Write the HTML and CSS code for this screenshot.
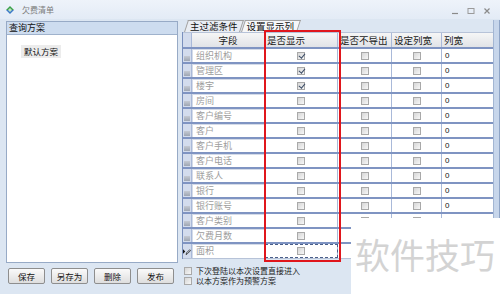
FILE: index.html
```html
<!DOCTYPE html>
<html>
<head>
<meta charset="utf-8">
<link rel="stylesheet" href="styles.css">
</head>
<body>
<div class="win">
  <div class="titlebar">
    <svg class="appicon" width="10" height="10" viewBox="0 0 10 10"><path d="M1 5 L5 1 L9 5 Z" fill="#3aa04a"/><path d="M1 5 L5 9 L9 5 Z" fill="#3a78c8"/><path d="M3 5 L5 3 L7 5 L5 7Z" fill="#bfe3c0"/></svg>
    <span class="title">欠费清单</span>
    <div class="controls">
      <svg width="8" height="8" viewBox="0 0 8 8"><path d="M1 6.5H7" stroke="#8a8a8a" stroke-width="1.2"/></svg>
      <svg width="8" height="8" viewBox="0 0 8 8"><rect x="1" y="1.5" width="6" height="5" fill="none" stroke="#9a9a9a"/></svg>
      <svg width="8" height="8" viewBox="0 0 8 8"><path d="M1.5 1.5L6.5 6.5M6.5 1.5L1.5 6.5" stroke="#8a8a8a" stroke-width="1.2"/></svg>
    </div>
  </div>
  <div class="main">
    <div class="left">
      <div class="plist">
        <div class="phead">查询方案</div>
        <div class="pbody"><span class="pitem">默认方案</span></div>
      </div>
      <div class="btns">
        <button class="btn">保存</button>
        <button class="btn">另存为</button>
        <button class="btn">删除</button>
        <button class="btn">发布</button>
      </div>
    </div>
    <div class="right">
      <div class="tabs">
        <span class="tab">主过滤条件</span>
        <span class="tab active">设置显示列</span>
      </div>
      <div class="grid">
        <div class="row head">
          <div class="c rh"></div>
          <div class="c hf">字段</div>
          <div class="c">是否显示</div>
          <div class="c">是否不导出</div>
          <div class="c">设定列宽</div>
          <div class="c">列宽</div>
        </div>
        <div class="row"><div class="c rh"><i></i></div><div class="c f">组织机构</div><div class="c cb"><span class="box on"></span></div><div class="c cb"><span class="box"></span></div><div class="c cb"><span class="box"></span></div><div class="c n">0</div></div>
        <div class="row"><div class="c rh"><i></i></div><div class="c f">管理区</div><div class="c cb"><span class="box on"></span></div><div class="c cb"><span class="box"></span></div><div class="c cb"><span class="box"></span></div><div class="c n">0</div></div>
        <div class="row"><div class="c rh"><i></i></div><div class="c f">楼宇</div><div class="c cb"><span class="box on"></span></div><div class="c cb"><span class="box"></span></div><div class="c cb"><span class="box"></span></div><div class="c n">0</div></div>
        <div class="row"><div class="c rh"><i></i></div><div class="c f">房间</div><div class="c cb"><span class="box"></span></div><div class="c cb"><span class="box"></span></div><div class="c cb"><span class="box"></span></div><div class="c n">0</div></div>
        <div class="row"><div class="c rh"><i></i></div><div class="c f">客户编号</div><div class="c cb"><span class="box"></span></div><div class="c cb"><span class="box"></span></div><div class="c cb"><span class="box"></span></div><div class="c n">0</div></div>
        <div class="row"><div class="c rh"><i></i></div><div class="c f">客户</div><div class="c cb"><span class="box"></span></div><div class="c cb"><span class="box"></span></div><div class="c cb"><span class="box"></span></div><div class="c n">0</div></div>
        <div class="row"><div class="c rh"><i></i></div><div class="c f">客户手机</div><div class="c cb"><span class="box"></span></div><div class="c cb"><span class="box"></span></div><div class="c cb"><span class="box"></span></div><div class="c n">0</div></div>
        <div class="row"><div class="c rh"><i></i></div><div class="c f">客户电话</div><div class="c cb"><span class="box"></span></div><div class="c cb"><span class="box"></span></div><div class="c cb"><span class="box"></span></div><div class="c n">0</div></div>
        <div class="row"><div class="c rh"><i></i></div><div class="c f">联系人</div><div class="c cb"><span class="box"></span></div><div class="c cb"><span class="box"></span></div><div class="c cb"><span class="box"></span></div><div class="c n">0</div></div>
        <div class="row"><div class="c rh"><i></i></div><div class="c f">银行</div><div class="c cb"><span class="box"></span></div><div class="c cb"><span class="box"></span></div><div class="c cb"><span class="box"></span></div><div class="c n">0</div></div>
        <div class="row"><div class="c rh"><i></i></div><div class="c f">银行账号</div><div class="c cb"><span class="box"></span></div><div class="c cb"><span class="box"></span></div><div class="c cb"><span class="box"></span></div><div class="c n">0</div></div>
        <div class="row"><div class="c rh"><i></i></div><div class="c f">客户类别</div><div class="c cb"><span class="box"></span></div><div class="c cb"><span class="box"></span></div><div class="c cb"><span class="box"></span></div><div class="c n">0</div></div>
        <div class="row"><div class="c rh"><i></i></div><div class="c f">欠费月数</div><div class="c cb"><span class="box"></span></div><div class="c cb"><span class="box"></span></div><div class="c cb"><span class="box"></span></div><div class="c n">0</div></div>
        <div class="row last"><div class="c rh cur"><svg width="9" height="9" viewBox="0 0 9 9"><path d="M0 2L2.5 4.5L0 7Z" fill="#111"/><path d="M3.5 8L4 6L7.5 2.5L8.5 3.5L5 7Z" fill="none" stroke="#222" stroke-width="0.9"/></svg></div><div class="c f">面积</div><div class="c cb focus"><span class="box"></span></div><div class="c cb"><span class="box"></span></div><div class="c cb"><span class="box"></span></div><div class="c n">0</div></div>
      </div>
      <div class="opts">
        <div class="opt"><span class="box"></span>下次登陆以本次设置直接进入</div>
        <div class="opt"><span class="box"></span>以本方案作为预警方案</div>
      </div>
    </div>
    <div class="vscroll"></div>
  </div>
  <div class="redbox"></div>
  <div class="watermark">软件技巧</div>
</div>
</body>
</html>
```
FILE: styles.css
```css
* { box-sizing: border-box; }
body {
  margin: 0;
  width: 500px;
  height: 294px;
  overflow: hidden;
  font-family: "Noto Sans CJK SC", "Noto Sans", sans-serif;
  background: #dde7f3;
}
.win {
  position: relative;
  width: 500px;
  height: 294px;
  background: #dce6f2;
  display: flex;
  flex-direction: column;
}
.titlebar {
  height: 19px;
  flex: none;
  display: flex;
  align-items: center;
  padding-left: 5px;
  background: linear-gradient(#eef3fa, #e3ebf6);
}
.title {
  margin-left: 7px;
  font-size: 8px;
  line-height: 10px;
  color: #7c7c7c;
}
.controls {
  margin-left: auto;
  margin-right: 9px;
  display: flex;
  gap: 8px;
  margin-top: 2px;
}
.main {
  flex: 1;
  display: flex;
  padding: 2px 0 0 6px;
  min-height: 0;
}
.left {
  width: 172px;
  flex: none;
  display: flex;
  flex-direction: column;
}
.plist {
  height: 242px;
  border: 1px solid #97aac6;
  background: #fff;
}
.phead {
  height: 13px;
  background: #cddcef;
  border-bottom: 1px solid #9fb2cc;
  font-size: 9px;
  line-height: 12px;
  padding-left: 2px;
  color: #111;
}
.pbody {
  padding: 1px 0 0 14px;
}
.pitem {
  display: inline-block;
  background: #ececec;
  font-size: 8.5px;
  line-height: 13px;
  height: 13px;
  padding: 0 3px;
  color: #111;
}
.btns {
  display: flex;
  gap: 6px;
  padding-left: 2px;
  margin-top: 5px;
}
.btn {
  width: 37px;
  height: 16px;
  padding: 0;
  border: 1px solid #8e8e8e;
  border-radius: 2px;
  background: linear-gradient(#fafafa, #dedede);
  font-family: "Noto Sans CJK SC", sans-serif;
  font-size: 8.5px;
  line-height: 14px;
  color: #111;
}
.right {
  width: 311px;
  flex: none;
  margin-left: 4px;
  display: flex;
  flex-direction: column;
}
.tabs {
  height: 12px;
  margin-top: -1px;
  display: flex;
  align-items: flex-end;
  padding-left: 5px;
  gap: 3px;
}
.tab {
  position: relative;
  font-size: 9.5px;
  line-height: 12px;
  height: 12px;
  padding: 0 3px;
  color: #111;
  z-index: 0;
}
.tab::before {
  content: "";
  position: absolute;
  left: -1px;
  right: -1px;
  top: 0;
  bottom: 0;
  border: 1px solid #a0a0a0;
  border-bottom: none;
  background: #e9edf3;
  transform: skewX(-18deg);
  z-index: -1;
}
.tab.active::before {
  background: #f6f7f9;
}
.grid {
  border-left: 1px solid #7a90bd;
  background: #fff;
}
.row {
  display: grid;
  grid-template-columns: 9px 73px 73px 54px 50px 52px;
  height: 15px;
  border-bottom: 2px solid #7f94c2;
}
.row.head {
  height: 17px;
  background: linear-gradient(#f6f6f6, #e1e3e7);
  border-bottom: 2px solid #7f94c2;
  border-top: 1px solid #b7c3d8;
}
.row.last {
  border-bottom: 1px solid #b7c3d8;
}
.c {
  border-right: 1px solid #a9b9d9;
  font-size: 9px;
  line-height: 13px;
  padding-left: 2px;
  color: #111;
  white-space: nowrap;
  overflow: hidden;
}
.head .c {
  font-size: 9.5px;
  line-height: 14px;
  color: #1a1a1a;
}
.c.hf { text-align: center; padding-left: 0; }
.c.rh {
  background: #d3dced;
  padding: 0;
  position: relative;
}
.c.rh i {
  position: absolute;
  left: 1px;
  bottom: 1px;
  width: 6px;
  height: 5px;
  background: linear-gradient(#c5cad3, #9ea6b3);
}
.c.rh.cur {
  display: flex;
  align-items: center;
  background: #d3dced;
}
.c.f {
  color: #9d9d9d;
  padding-left: 4px;
  box-shadow: inset 1px 1px 0 #d4dbe8;
}
.c.cb {
  display: flex;
  align-items: center;
  justify-content: center;
  padding: 0;
}
.c.focus {
  outline: 1px dashed #4a5f8a;
  outline-offset: -1px;
}
.c.n {
  padding-left: 3px;
  font-family: "Liberation Sans", sans-serif;
  font-size: 8px;
}
.box {
  display: inline-block;
  flex: none;
  width: 8px;
  height: 8px;
  border: 1px solid #a9a9a9;
  background: linear-gradient(135deg, #d6d6d6, #f7f7f7);
  position: relative;
}
.box.on::after {
  content: "";
  position: absolute;
  left: 1.5px;
  top: -0.5px;
  width: 2.5px;
  height: 5px;
  border-right: 1.3px solid #3c4c66;
  border-bottom: 1.3px solid #3c4c66;
  transform: rotate(40deg);
}
.opts {
  margin-top: 7px;
  padding-left: 2px;
}
.opt {
  display: flex;
  align-items: center;
  gap: 4px;
  height: 10px;
  font-size: 8px;
  line-height: 10px;
  color: #1a1a1a;
}
.vscroll {
  width: 7px;
  margin-top: -1px;
  background: #c7d6eb;
  border-left: 1px solid #a3b6d3;
  border-right: 1px solid #8ea4c6;
}
.redbox {
  position: absolute;
  left: 264px;
  top: 30px;
  width: 77px;
  height: 232px;
  border: 2px solid #e0161c;
}
.watermark {
  position: absolute;
  left: 351px;
  top: 218px;
  width: 149px;
  height: 76px;
  background: #fff;
  font-size: 35px;
  line-height: 35px;
  color: #d3d3d3;
  padding: 18px 0 0 4px;
  white-space: nowrap;
}
```
